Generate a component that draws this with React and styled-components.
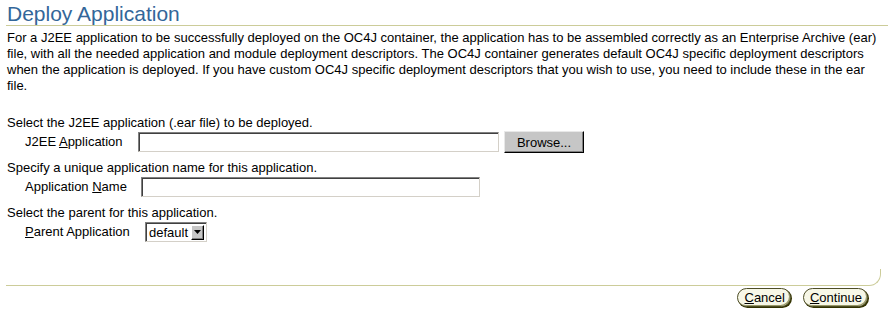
import React from "react";
import styled, { createGlobalStyle } from "styled-components";

const GlobalStyle = createGlobalStyle`
  body {
    margin: 0;
    background: #ffffff;
    font-family: "Liberation Sans", Arial, sans-serif;
    color: #000000;
  }
`;

const Page = styled.div`
  width: 888px;
  height: 312px;
  padding: 0 8px 0 6px;
  box-sizing: border-box;
  font-size: 13px;
  overflow: hidden;
`;

const Title = styled.h1`
  margin: 0 -8px 0 0;
  padding: 3px 0 0 1px;
  height: 22px;
  border-bottom: 1px solid #cccc99;
  font-size: 21px;
  font-weight: normal;
  line-height: 22px;
  color: #336699;
`;

const Intro = styled.p`
  margin: 4px 0 0 1px;
  line-height: 16px;
  white-space: nowrap;
`;

const Section = styled.div`
  margin-top: ${(p) => p.$top}px;
  padding-left: 1px;
`;

const Hint = styled.div`
  line-height: 15px;
`;

const Row = styled.div`
  display: flex;
  align-items: center;
  gap: 5px;
  min-height: 22px;
  margin-top: 1px;
  padding-left: 18px;
`;

const Label = styled.label`
  width: ${(p) => p.$w}px;
  line-height: 16px;
`;

const Key = styled.span`
  text-decoration: underline;
`;

const TextInput = styled.div`
  width: ${(p) => p.$w}px;
  height: 20px;
  box-sizing: border-box;
  border-style: solid;
  border-width: 1px;
  border-color: #808080 #d4d0c8 #d4d0c8 #808080;
  box-shadow: inset 1px 1px 0 #404040;
  background: #ffffff;
`;

const Browse = styled.div`
  width: 80px;
  height: 22px;
  box-sizing: border-box;
  border-style: solid;
  border-width: 1px;
  border-color: #e8e8e8 #000000 #000000 #e8e8e8;
  box-shadow: inset -1px -1px 0 #808080;
  background: #c6c6c6;
  display: flex;
  align-items: center;
  justify-content: center;
`;

const Select = styled.div`
  display: flex;
  align-items: center;
  justify-content: space-between;
  width: 62px;
  height: 20px;
  box-sizing: border-box;
  border-style: solid;
  border-width: 1px;
  border-color: #808080 #d4d0c8 #d4d0c8 #808080;
  box-shadow: inset 1px 1px 0 #404040;
  padding: 2px 2px 2px 3px;
`;

const Arrow = styled.div`
  width: 13px;
  height: 15px;
  box-sizing: border-box;
  border-style: solid;
  border-width: 1px;
  border-color: #ffffff #000000 #000000 #ffffff;
  box-shadow: inset -1px -1px 0 #808080;
  background: #c6c6c6;
  display: flex;
  align-items: center;
  justify-content: center;
`;

const Footer = styled.div`
  margin-top: 26px;
  height: 16px;
  border-bottom: 1px solid #cccc99;
  border-right: 1px solid #cccc99;
  border-bottom-right-radius: 12px;
  margin-right: -1px;
`;

const Actions = styled.div`
  display: flex;
  justify-content: flex-end;
  gap: 12px;
  margin-top: 2px;
  padding-right: 12px;
`;

const Pill = styled.div`
  height: 19px;
  box-sizing: border-box;
  padding: 0 5px 0 6px;
  border: 1px solid #4d4d26;
  border-radius: 10px;
  box-shadow: 1px 1px 0 #333300, inset -1px -1px 0 #999966;
  background: #f7f7e7;
  line-height: 17px;
`;

export default function App() {
  return (
    <>
      <GlobalStyle />
      <Page>
        <Title>Deploy Application</Title>
        <Intro>
          For a J2EE application to be successfully deployed on the OC4J container, the application has to be
          assembled correctly as an Enterprise Archive (ear)
          <br />
          file, with all the needed application and module deployment descriptors. The OC4J container generates
          default OC4J specific deployment descriptors
          <br />
          when the application is deployed. If you have custom OC4J specific deployment descriptors that you wish
          to use, you need to include these in the ear
          <br />
          file.
        </Intro>

        <Section $top={21}>
          <Hint>Select the J2EE application (.ear file) to be deployed.</Hint>
          <Row>
            <Label $w={108}>
              J2EE <Key>A</Key>pplication
            </Label>
            <TextInput $w={361} />
            <Browse>Browse...</Browse>
          </Row>
        </Section>

        <Section $top={7}>
          <Hint>Specify a unique application name for this application.</Hint>
          <Row>
            <Label $w={111}>
              Application <Key>N</Key>ame
            </Label>
            <TextInput $w={339} />
          </Row>
        </Section>

        <Section $top={7}>
          <Hint>Select the parent for this application.</Hint>
          <Row>
            <Label $w={115}>
              <Key>P</Key>arent Application
            </Label>
            <Select>
              default
              <Arrow>
                <svg width="7" height="4" viewBox="0 0 7 4">
                  <path d="M0 0h7L3.5 4z" fill="#000" />
                </svg>
              </Arrow>
            </Select>
          </Row>
        </Section>

        <Footer />
        <Actions>
          <Pill>
            <Key>C</Key>ancel
          </Pill>
          <Pill>
            <Key>C</Key>ontinue
          </Pill>
        </Actions>
      </Page>
    </>
  );
}
